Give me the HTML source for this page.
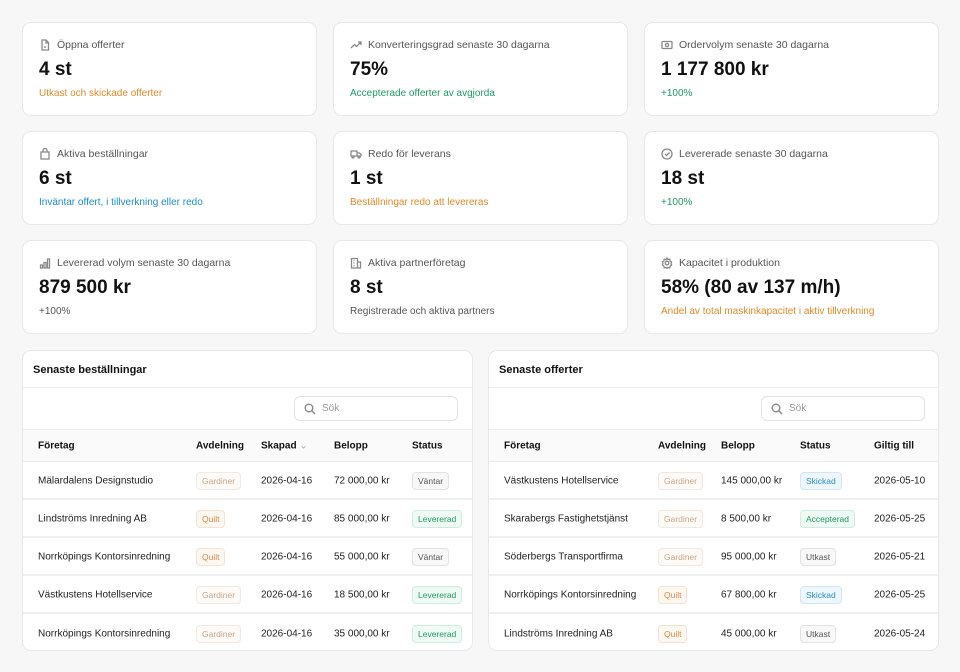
<!DOCTYPE html>
<html><head><meta charset="utf-8"><style>
*{box-sizing:border-box;margin:0;padding:0}
body{width:960px;height:672px;background:#f7f7f7;font-family:"Liberation Sans",sans-serif;position:relative;overflow:hidden;color:#111}
.card{position:absolute;width:295px;height:94px;background:#fff;border:1px solid #e8e8e8;border-radius:9px}
.card .t{position:absolute;left:16px;top:16px;font-size:10.5px;color:#555;display:flex;align-items:center;gap:6px}
.card .t svg{width:12px;height:12px;stroke:#888;fill:none;stroke-width:1.3}
.card .v{position:absolute;left:16px;top:36px;font-size:19px;font-weight:bold;color:#111}
.card .s{position:absolute;left:16px;top:65px;font-size:10px}
.o{color:#e08a2a}.g{color:#1e9a63}.b{color:#1c8cd0}.n{color:#555}
.tbl{position:absolute;top:350px;width:451px;height:301px;background:#fff;border:1px solid #e8e8e8;border-radius:9px;overflow:hidden}
.tbl h3{position:absolute;left:10px;top:13px;font-size:11px;font-weight:bold}
.hr{position:absolute;left:0;right:0;height:1px;background:#eee}
.search{position:absolute;top:45px;width:164px;height:25px;border:1px solid #e2e2e2;border-radius:6px;font-size:10px;color:#999;padding:6px 0 0 27px}
.search svg{position:absolute;left:9px;top:6px;width:12px;height:12px;stroke:#888;fill:none;stroke-width:1.4}
.head{position:absolute;top:78px;left:0;right:0;height:33px;background:#fafafa;border-top:1px solid #eee;border-bottom:1px solid #eee;font-size:10px;font-weight:bold}
.row{position:absolute;left:0;right:0;height:38px;border-bottom:2px solid #f0f0f0;font-size:10px;color:#222}
.c{position:absolute;top:52%;transform:translateY(-50%);white-space:nowrap}
.tag{font-size:8.5px;padding:3px 5px;border-radius:4px;border:1px solid}
.gar{color:#c9a58a;border-color:#f2e9e2;background:#fdfaf7}
.qu{color:#d58a45;border-color:#f3e2d2;background:#fdf7f1}
.wa{color:#555;border-color:#e2e2e2;background:#f8f8f8}
.le{color:#1e9a63;border-color:#cdeedd;background:#eefaf3}
.sk{color:#2a8cca;border-color:#cfe6f7;background:#eef7fd}
</style></head><body>

<div class="card" style="left:22px;top:22px"><div class="t"><svg viewBox="0 0 12 12"><path d="M3 1h4l2.5 2.5V11H3z M7 1v3h2.5 M5 8h2"/></svg>Öppna offerter</div><div class="v">4 st</div><div class="s o">Utkast och skickade offerter</div></div>
<div class="card" style="left:333px;top:22px"><div class="t"><svg viewBox="0 0 12 12"><path d="M1 9l3.5-3.5 2 2L11 3 M8 3h3v3"/></svg>Konverteringsgrad senaste 30 dagarna</div><div class="v">75%</div><div class="s g">Accepterade offerter av avgjorda</div></div>
<div class="card" style="left:644px;top:22px"><div class="t"><svg viewBox="0 0 12 12"><rect x="1" y="2.5" width="10" height="7" rx="1"/><circle cx="6" cy="6" r="1.6"/></svg>Ordervolym senaste 30 dagarna</div><div class="v">1 177 800 kr</div><div class="s g">+100%</div></div>

<div class="card" style="left:22px;top:131px"><div class="t"><svg viewBox="0 0 12 12"><path d="M2 4h8v7H2z M4 4V2.5a2 2 0 014 0V4"/></svg>Aktiva beställningar</div><div class="v">6 st</div><div class="s b">Inväntar offert, i tillverkning eller redo</div></div>
<div class="card" style="left:333px;top:131px"><div class="t"><svg viewBox="0 0 12 12"><path d="M1 3h6v5H1z M7 5h2.5L11 6.5V8H7"/><circle cx="3" cy="9" r="1"/><circle cx="9" cy="9" r="1"/></svg>Redo för leverans</div><div class="v">1 st</div><div class="s o">Beställningar redo att levereras</div></div>
<div class="card" style="left:644px;top:131px"><div class="t"><svg viewBox="0 0 12 12"><circle cx="6" cy="6" r="5"/><path d="M4 6l1.5 1.5L8.5 4.5"/></svg>Levererade senaste 30 dagarna</div><div class="v">18 st</div><div class="s g">+100%</div></div>

<div class="card" style="left:22px;top:240px"><div class="t"><svg viewBox="0 0 12 12"><path d="M1.5 11V8h2v3z M5 11V5.5h2V11z M8.5 11V2h2v9z"/></svg>Levererad volym senaste 30 dagarna</div><div class="v">879 500 kr</div><div class="s n">+100%</div></div>
<div class="card" style="left:333px;top:240px"><div class="t"><svg viewBox="0 0 12 12"><path d="M1.5 11V1.5h6V11 M7.5 5h3v6 M1 11h10 M3.5 3.5h1 M3.5 6h1 M3.5 8.5h1"/></svg>Aktiva partnerföretag</div><div class="v">8 st</div><div class="s n">Registrerade och aktiva partners</div></div>
<div class="card" style="left:644px;top:240px"><div class="t"><svg viewBox="0 0 12 12"><circle cx="6" cy="6" r="1.8"/><path d="M6 1l1 1.5 1.8-.3.3 1.8L10.6 5 10 6.5l.6 1.6-1.5.9-.3 1.8L7 10.5 6 11.5 5 10.5l-1.8.3-.3-1.8L1.4 8l.6-1.5L1.4 5 2.9 4l.3-1.8L5 2.5z"/></svg>Kapacitet i produktion</div><div class="v">58% (80 av 137 m/h)</div><div class="s o">Andel av total maskinkapacitet i aktiv tillverkning</div></div>

<div class="tbl" style="left:22px">
<h3>Senaste beställningar</h3><div class="hr" style="top:36px"></div>
<div class="search" style="left:271px"><svg viewBox="0 0 12 12"><circle cx="5" cy="5" r="3.8"/><path d="M8 8l3 3"/></svg>Sök</div>
<div class="head"><span class="c" style="left:15px">Företag</span><span class="c" style="left:173px">Avdelning</span><span class="c" style="left:238px">Skapad <span style="color:#aaa;font-weight:normal">⌄</span></span><span class="c" style="left:311px">Belopp</span><span class="c" style="left:389px">Status</span></div>
<div class="row" style="top:111px"><span class="c" style="left:15px">Mälardalens Designstudio</span><span class="c tag gar" style="left:173px">Gardiner</span><span class="c" style="left:238px">2026-04-16</span><span class="c" style="left:311px">72 000,00 kr</span><span class="c tag wa" style="left:389px">Väntar</span></div>
<div class="row" style="top:149px"><span class="c" style="left:15px">Lindströms Inredning AB</span><span class="c tag qu" style="left:173px">Quilt</span><span class="c" style="left:238px">2026-04-16</span><span class="c" style="left:311px">85 000,00 kr</span><span class="c tag le" style="left:389px">Levererad</span></div>
<div class="row" style="top:187px"><span class="c" style="left:15px">Norrköpings Kontorsinredning</span><span class="c tag qu" style="left:173px">Quilt</span><span class="c" style="left:238px">2026-04-16</span><span class="c" style="left:311px">55 000,00 kr</span><span class="c tag wa" style="left:389px">Väntar</span></div>
<div class="row" style="top:225px"><span class="c" style="left:15px">Västkustens Hotellservice</span><span class="c tag gar" style="left:173px">Gardiner</span><span class="c" style="left:238px">2026-04-16</span><span class="c" style="left:311px">18 500,00 kr</span><span class="c tag le" style="left:389px">Levererad</span></div>
<div class="row" style="top:263px;border:none"><span class="c" style="left:15px">Norrköpings Kontorsinredning</span><span class="c tag gar" style="left:173px">Gardiner</span><span class="c" style="left:238px">2026-04-16</span><span class="c" style="left:311px">35 000,00 kr</span><span class="c tag le" style="left:389px">Levererad</span></div>
</div>

<div class="tbl" style="left:488px">
<h3>Senaste offerter</h3><div class="hr" style="top:36px"></div>
<div class="search" style="left:272px"><svg viewBox="0 0 12 12"><circle cx="5" cy="5" r="3.8"/><path d="M8 8l3 3"/></svg>Sök</div>
<div class="head"><span class="c" style="left:15px">Företag</span><span class="c" style="left:169px">Avdelning</span><span class="c" style="left:232px">Belopp</span><span class="c" style="left:311px">Status</span><span class="c" style="left:385px">Giltig till</span></div>
<div class="row" style="top:111px"><span class="c" style="left:15px">Västkustens Hotellservice</span><span class="c tag gar" style="left:169px">Gardiner</span><span class="c" style="left:232px">145 000,00 kr</span><span class="c tag sk" style="left:311px">Skickad</span><span class="c" style="left:385px">2026-05-10</span></div>
<div class="row" style="top:149px"><span class="c" style="left:15px">Skarabergs Fastighetstjänst</span><span class="c tag gar" style="left:169px">Gardiner</span><span class="c" style="left:232px">8 500,00 kr</span><span class="c tag le" style="left:311px">Accepterad</span><span class="c" style="left:385px">2026-05-25</span></div>
<div class="row" style="top:187px"><span class="c" style="left:15px">Söderbergs Transportfirma</span><span class="c tag gar" style="left:169px">Gardiner</span><span class="c" style="left:232px">95 000,00 kr</span><span class="c tag wa" style="left:311px">Utkast</span><span class="c" style="left:385px">2026-05-21</span></div>
<div class="row" style="top:225px"><span class="c" style="left:15px">Norrköpings Kontorsinredning</span><span class="c tag qu" style="left:169px">Quilt</span><span class="c" style="left:232px">67 800,00 kr</span><span class="c tag sk" style="left:311px">Skickad</span><span class="c" style="left:385px">2026-05-25</span></div>
<div class="row" style="top:263px;border:none"><span class="c" style="left:15px">Lindströms Inredning AB</span><span class="c tag qu" style="left:169px">Quilt</span><span class="c" style="left:232px">45 000,00 kr</span><span class="c tag wa" style="left:311px">Utkast</span><span class="c" style="left:385px">2026-05-24</span></div>
</div>
</body></html>
